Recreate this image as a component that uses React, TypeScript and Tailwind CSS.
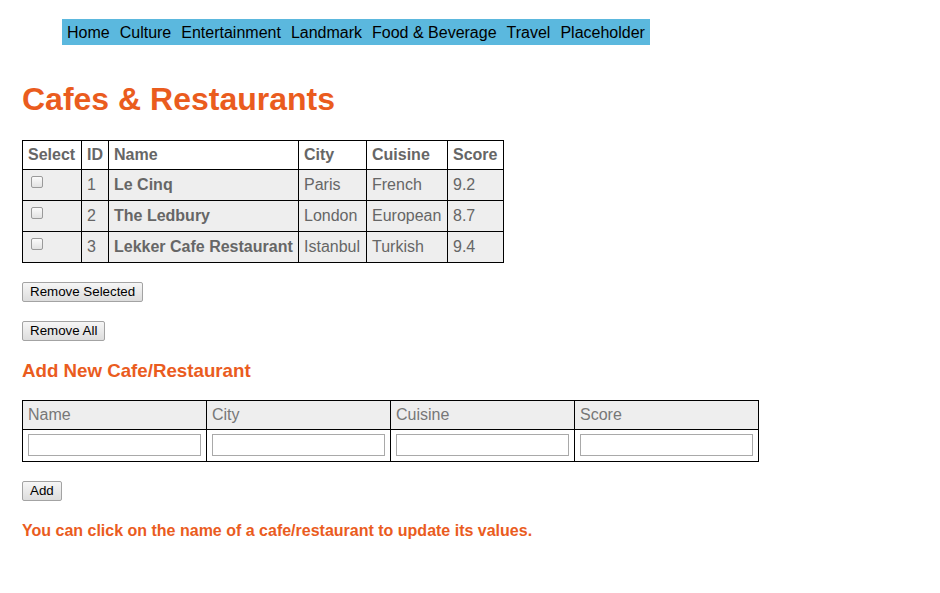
import React from "react";

const nav = ["Home", "Culture", "Entertainment", "Landmark", "Food & Beverage", "Travel", "Placeholder"];
const rows = [
  { id: 1, name: "Le Cinq", city: "Paris", cuisine: "French", score: "9.2" },
  { id: 2, name: "The Ledbury", city: "London", cuisine: "European", score: "8.7" },
  { id: 3, name: "Lekker Cafe Restaurant", city: "Istanbul", cuisine: "Turkish", score: "9.4" },
];

function Btn({ children }: { children: React.ReactNode }) {
  return (
    <button className="block h-[20px] px-[7px] border border-[#a3a3a3] rounded-[2px] bg-gradient-to-b from-[#f6f6f6] to-[#dddddd] text-[13.33px] leading-[16px] text-black">
      {children}
    </button>
  );
}

export default function App() {
  const th = "border border-black px-[5px] py-[5px] text-left font-bold leading-[18px]";
  const td = "border border-black px-[5px] py-[6px] leading-[18px]";
  return (
    <div className="bg-white min-h-[593px] pl-[22px] pt-[19px] text-[16px] text-[#666]" style={{ fontFamily: '"Liberation Sans", Arial, sans-serif' }}>
      <div className="ml-[40px] inline-flex bg-[#5bb8de] pt-[5px] pb-[3px]">
        {nav.map((n) => (
          <span key={n} className="px-[5px] text-black leading-[18px]">{n}</span>
        ))}
      </div>
      <h1 className="mt-[36px] text-[32px] leading-[37px] font-bold text-[#ea5c1e]">Cafes &amp; Restaurants</h1>
      <table className="mt-[22px] border-collapse">
        <thead>
          <tr className="bg-white">
            <th className={th + " w-[59px]"}>Select</th>
            <th className={th + " w-[27px]"}>ID</th>
            <th className={th + " w-[190px]"}>Name</th>
            <th className={th + " w-[68px]"}>City</th>
            <th className={th + " w-[81px]"}>Cuisine</th>
            <th className={th + " w-[56px]"}>Score</th>
          </tr>
        </thead>
        <tbody>
          {rows.map((r) => (
            <tr key={r.id} className="bg-[#eeeeee]">
              <td className={td}>
                <span className="block ml-[3px] mt-[-3px] mb-[3px] w-[12px] h-[12px] rounded-[2px] border border-[#9a9a9a] bg-gradient-to-b from-[#fbfbfb] to-[#e2e2e2]" />
              </td>
              <td className={td}>{r.id}</td>
              <td className={td + " font-bold"}>{r.name}</td>
              <td className={td}>{r.city}</td>
              <td className={td}>{r.cuisine}</td>
              <td className={td}>{r.score}</td>
            </tr>
          ))}
        </tbody>
      </table>
      <div className="mt-[19px]"><Btn>Remove Selected</Btn></div>
      <div className="mt-[19px]"><Btn>Remove All</Btn></div>
      <h3 className="mt-[19px] text-[18.72px] leading-[22px] font-bold text-[#ea5c1e]">Add New Cafe/Restaurant</h3>
      <table className="mt-[18px] border-collapse">
        <thead>
          <tr className="bg-[#eeeeee]">
            {["Name", "City", "Cuisine", "Score"].map((h) => (
              <th key={h} className="border border-black px-[5px] py-[5px] text-left font-normal leading-[18px] w-[184px] text-[#777]">{h}</th>
            ))}
          </tr>
        </thead>
        <tbody>
          <tr className="bg-white">
            {[0, 1, 2, 3].map((i) => (
              <td key={i} className="border border-black px-[5px] pt-[4px] pb-[5px]">
                <input className="block w-[173px] h-[22px] border border-[#a9a9a9] bg-white" />
              </td>
            ))}
          </tr>
        </tbody>
      </table>
      <div className="mt-[19px]"><Btn>Add</Btn></div>
      <p className="mt-[21px] font-bold leading-[18px] text-[#ea5c1e]">You can click on the name of a cafe/restaurant to update its values.</p>
    </div>
  );
}
